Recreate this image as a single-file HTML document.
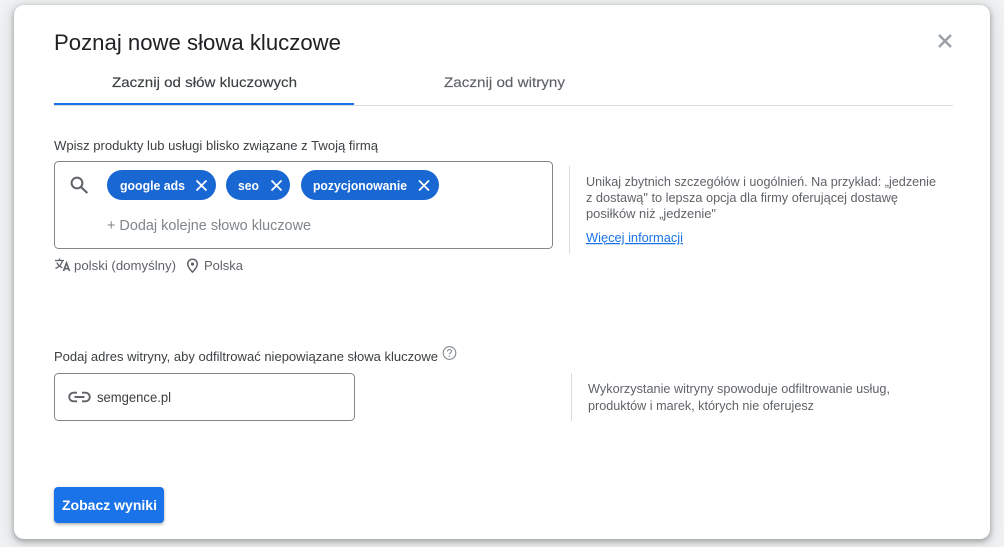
<!DOCTYPE html>
<html lang="pl">
<head>
<meta charset="utf-8">
<title>Poznaj nowe słowa kluczowe</title>
<style>
html,body{margin:0;padding:0;width:1004px;height:547px;overflow:hidden;background:#f1f3f4}
#card{position:absolute;left:14px;top:5px;width:976px;height:534px;background:#fff;border-radius:10px;box-shadow:0 2px 5px 1px rgba(60,64,67,.35),0 3px 14px 6px rgba(60,64,67,.1)}
svg{position:absolute;left:0;top:0}
text{font-family:"Liberation Sans",sans-serif}
</style>
</head>
<body>
<div id="card"></div>
<svg width="1004" height="547" viewBox="0 0 1004 547" xmlns="http://www.w3.org/2000/svg">
<defs><filter id="b" x="-10%" y="-20%" width="120%" height="150%"><feGaussianBlur stdDeviation="1.500"/></filter></defs>
<text x="54" y="50" font-size="22" fill="#202124" textLength="287" lengthAdjust="spacingAndGlyphs">Poznaj nowe słowa kluczowe</text>
<path d="M939 35l12 12M951 35l-12 12" stroke="#9aa0a6" stroke-width="2.400" fill="none"/>
<text x="112" y="87" font-size="14" fill="#3c4043" stroke="#3c4043" stroke-width=".15" textLength="185" lengthAdjust="spacingAndGlyphs">Zacznij od słów kluczowych</text>
<text x="444" y="87" font-size="14" fill="#5f6368" stroke="#5f6368" stroke-width=".15" textLength="121" lengthAdjust="spacingAndGlyphs">Zacznij od witryny</text>
<rect x="54" y="105" width="899" height="1" fill="#dadce0"/>
<rect x="54" y="103" width="300" height="2" fill="#1a73e8"/>

<text x="54" y="150" font-size="13" fill="#3c4043" textLength="324" lengthAdjust="spacingAndGlyphs">Wpisz produkty lub usługi blisko związane z Twoją firmą</text>
<rect x="54.500" y="161.500" width="498" height="87" rx="4" fill="#fff" stroke="#80868b"/>
<circle cx="77" cy="183" r="5.400" fill="none" stroke="#5f6368" stroke-width="2"/>
<path d="M81 187l6.300 6" stroke="#5f6368" stroke-width="2.200" fill="none"/>

<rect x="107" y="170" width="109" height="30" rx="15" fill="#1967d2"/>
<text x="120" y="190" font-size="13" font-weight="700" fill="#fff" textLength="65" lengthAdjust="spacingAndGlyphs">google ads</text>
<path d="M196.500 180.500l10 10M206.500 180.500l-10 10" stroke="#fff" stroke-width="1.800" fill="none"/>
<rect x="226" y="170" width="64" height="30" rx="15" fill="#1967d2"/>
<text x="238" y="190" font-size="13" font-weight="700" fill="#fff" textLength="21" lengthAdjust="spacingAndGlyphs">seo</text>
<path d="M271.500 180.500l10 10M281.500 180.500l-10 10" stroke="#fff" stroke-width="1.800" fill="none"/>
<rect x="301" y="170" width="138" height="30" rx="15" fill="#1967d2"/>
<text x="313" y="190" font-size="13" font-weight="700" fill="#fff" textLength="94" lengthAdjust="spacingAndGlyphs">pozycjonowanie</text>
<path d="M419 180.500l10 10M429 180.500l-10 10" stroke="#fff" stroke-width="1.800" fill="none"/>

<text x="107" y="230" font-size="14.500" fill="#80868b" textLength="204" lengthAdjust="spacingAndGlyphs">+ Dodaj kolejne słowo kluczowe</text>

<g fill="none" stroke="#5f6368" stroke-width="1.300">
<path d="M55 260.500h9M59.500 258.500v2M62.500 260.500c-.8 3.500-3.500 6.500-7 8M56.800 262.500c1 2.300 3 4 5.500 5.300"/>
<path d="M63.500 271l3-8 3 8M64.500 268.700h4" stroke-width="1.600"/>
</g>
<text x="74" y="270" font-size="13" fill="#5f6368" textLength="102" lengthAdjust="spacingAndGlyphs">polski (domyślny)</text>
<path d="M192.500 259.300c-2.800 0-4.800 2.100-4.800 4.700 0 3.300 4.800 8.100 4.800 8.100s4.800-4.800 4.800-8.100c0-2.600-2-4.700-4.800-4.700z" fill="none" stroke="#5f6368" stroke-width="1.500"/>
<circle cx="192.500" cy="264.100" r="1.600" fill="#5f6368"/>
<text x="204" y="270" font-size="13" fill="#5f6368" textLength="39" lengthAdjust="spacingAndGlyphs">Polska</text>

<rect x="569" y="166" width="1" height="88" fill="#dadce0"/>
<g font-size="12.500" fill="#5f6368">
<text x="586" y="186" textLength="350" lengthAdjust="spacingAndGlyphs">Unikaj zbytnich szczegółów i uogólnień. Na przykład: „jedzenie</text>
<text x="586" y="202" textLength="312" lengthAdjust="spacingAndGlyphs">z dostawą" to lepsza opcja dla firmy oferującej dostawę</text>
<text x="586" y="218" textLength="130" lengthAdjust="spacingAndGlyphs">posiłków niż „jedzenie"</text>
</g>
<text x="586" y="242" font-size="12.500" fill="#1a73e8" text-decoration="underline" textLength="97" lengthAdjust="spacingAndGlyphs">Więcej informacji</text>

<text x="54" y="361" font-size="13" fill="#3c4043" textLength="384" lengthAdjust="spacingAndGlyphs">Podaj adres witryny, aby odfiltrować niepowiązane słowa kluczowe</text>
<circle cx="449.500" cy="353" r="6.300" fill="none" stroke="#80868b" stroke-width="1.100"/>
<path d="M447.500 351.500c0-1.200.9-2 2-2s2 .8 2 1.800c0 1.500-2 1.500-2 3" fill="none" stroke="#80868b" stroke-width="1.100"/>
<circle cx="449.500" cy="356.300" r=".7" fill="#80868b"/>

<rect x="54.500" y="373.500" width="300" height="47" rx="4" fill="#fff" stroke="#80868b"/>
<path d="M77 392.700h-3.500a4.300 4.300 0 0 0 0 8.600H77M82 392.700h3.500a4.300 4.300 0 0 1 0 8.600H82M74.500 397h10" fill="none" stroke="#5f6368" stroke-width="1.900"/>
<text x="97" y="402" font-size="13.500" fill="#3c4043" textLength="74" lengthAdjust="spacingAndGlyphs">semgence.pl</text>

<rect x="571" y="373" width="1" height="48" fill="#dadce0"/>
<g font-size="12.500" fill="#5f6368">
<text x="588" y="393" textLength="302" lengthAdjust="spacingAndGlyphs">Wykorzystanie witryny spowoduje odfiltrowanie usług,</text>
<text x="588" y="410" textLength="226" lengthAdjust="spacingAndGlyphs">produktów i marek, których nie oferujesz</text>
</g>

<rect x="54" y="488.500" width="110" height="36" rx="4" fill="#3c4043" opacity=".45" filter="url(#b)"/>
<rect x="54" y="487" width="110" height="36" rx="4" fill="#1a73e8"/>
<text x="62" y="510" font-size="14" font-weight="700" fill="#fff" textLength="95" lengthAdjust="spacingAndGlyphs">Zobacz wyniki</text>
</svg>
</body>
</html>
